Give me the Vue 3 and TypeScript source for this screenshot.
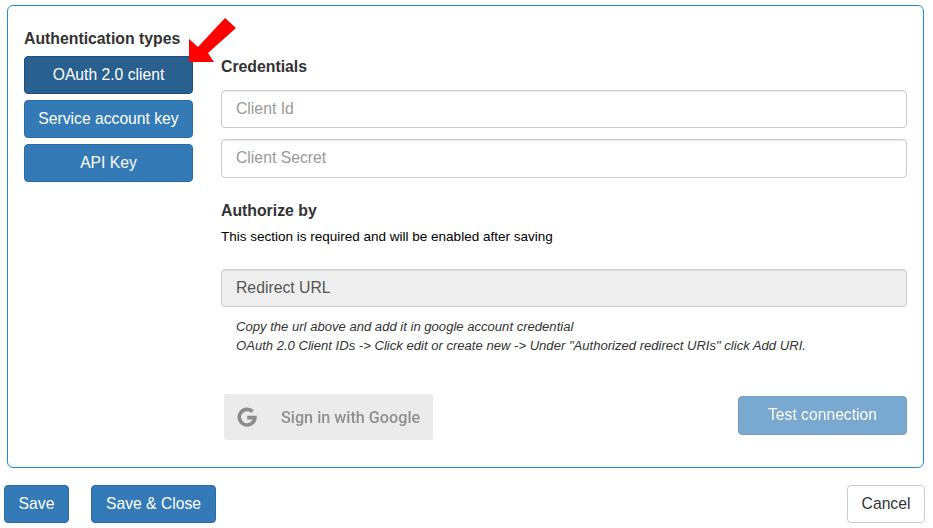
<script setup lang="ts">
const types = ['OAuth 2.0 client', 'Service account key', 'API Key']
</script>

<template>
  <div class="page">
    <section class="panel">
      <aside class="side">
        <h4 class="side-title">Authentication types</h4>
        <button v-for="(t, i) in types" :key="t" class="btn primary type" :class="{ active: i === 0 }">{{ t }}</button>
      </aside>
      <div class="main">
        <h4 class="cred">Credentials</h4>
        <input class="field first" placeholder="Client Id" />
        <input class="field second" placeholder="Client Secret" />
        <h4 class="auth">Authorize by</h4>
        <p class="note">This section is required and will be enabled after saving</p>
        <div class="field disabled">Redirect URL</div>
        <p class="help">Copy the url above and add it in google account credential<br />OAuth 2.0 Client IDs -&gt; Click edit or create new -&gt; Under "Authorized redirect URIs" click Add URI.</p>
        <div class="actions">
          <div class="google">
            <svg class="g" width="20" height="20" viewBox="0 0 20 20">
              <path d="M15.6 4.6A7.8 7.8 0 1 0 17.9 10.6H10.2" fill="none" stroke="#8c8c8c" stroke-width="3.6" />
            </svg>
            <span>Sign in with Google</span>
          </div>
          <button class="btn primary test">Test connection</button>
        </div>
      </div>
      <svg class="arrow" width="52" height="50" viewBox="0 0 52 50">
        <polygon points="4,47 4,24 13,32 40,3 51,13 23,38 29,47" fill="#fe0000" />
      </svg>
    </section>
    <footer class="bottom">
      <button class="btn primary save">Save</button>
      <button class="btn primary close">Save &amp; Close</button>
      <button class="btn cancel">Cancel</button>
    </footer>
  </div>
</template>

<style scoped>
.page {
  width: 933px;
  height: 528px;
  overflow: hidden;
  font-family: "Liberation Sans", Arial, sans-serif;
  color: #333;
  box-sizing: border-box;
  padding-top: 5px;
}
.panel {
  position: relative;
  box-sizing: border-box;
  width: 917px;
  height: 463px;
  margin-left: 7px;
  border: 1px solid #1b8ecf;
  border-radius: 6px;
  padding: 24px 16px 0;
  display: flex;
  gap: 28px;
}
.side {
  width: 169px;
  display: flex;
  flex-direction: column;
}
h4 {
  margin: 0;
  font-size: 15.8px;
  line-height: 18px;
  font-weight: 700;
  color: #333;
}
.side-title {
  margin-bottom: 8px;
}
.btn {
  box-sizing: border-box;
  height: 38px;
  border-radius: 4px;
  border: 1px solid transparent;
  font-family: inherit;
  font-size: 15.7px;
  padding: 0;
}
.primary {
  background: #337ab7;
  border-color: #2e6da4;
  color: #fff;
}
.type {
  width: 169px;
  margin-bottom: 6px;
}
.type.active {
  background: #286090;
  border-color: #204d74;
}
.main {
  width: 686px;
  display: flex;
  flex-direction: column;
}
.cred {
  margin-top: 28px;
}
.field {
  box-sizing: border-box;
  display: block;
  width: 686px;
  height: 38px;
  border: 1px solid #ccc;
  border-radius: 4px;
  padding: 0 14px;
  font-family: inherit;
  font-size: 15.75px;
  color: #555;
  background: #fff;
  outline: none;
  box-shadow: inset 0 1px 1px rgba(0, 0, 0, 0.075);
}
.field::placeholder {
  color: #999;
  opacity: 1;
}
.first {
  margin-top: 14px;
}
.second {
  margin-top: 11px;
  height: 39px;
  padding-bottom: 2px;
}
.auth {
  margin-top: 24px;
}
.note {
  margin: 7px 0 0;
  font-size: 13.5px;
  line-height: 20px;
  color: #000;
}
.disabled {
  margin-top: 22px;
  background: #eee;
  line-height: 36px;
}
.help {
  margin: 10px 0 0 15px;
  font-size: 13.08px;
  line-height: 19px;
  font-style: italic;
  color: #333;
}
.actions {
  margin-top: 39px;
  display: flex;
  justify-content: space-between;
  align-items: flex-start;
}
.google {
  box-sizing: border-box;
  margin-left: 3px;
  width: 209px;
  height: 46px;
  background: #ebebeb;
  border-radius: 2px;
  display: flex;
  align-items: center;
  padding-left: 13px;
  font-family: Roboto, sans-serif;
  font-size: 16.2px;
  font-weight: 500;
  color: #8f8f8f;
  filter: blur(0.4px);
}
.g {
  margin-right: 24px;
  flex: none;
}
.test {
  width: 169px;
  height: 39px;
  margin-top: 2px;
  padding-bottom: 2px;
  opacity: 0.65;
}
.bottom {
  margin-top: 17px;
  padding: 0 8px 0 4px;
  display: flex;
}
.save {
  width: 65px;
}
.close {
  width: 125px;
  margin-left: 22px;
}
.cancel {
  width: 78px;
  margin-left: auto;
  background: #fff;
  border-color: #ccc;
  color: #333;
}
.arrow {
  position: absolute;
  left: 177px;
  top: 9px;
}
</style>
